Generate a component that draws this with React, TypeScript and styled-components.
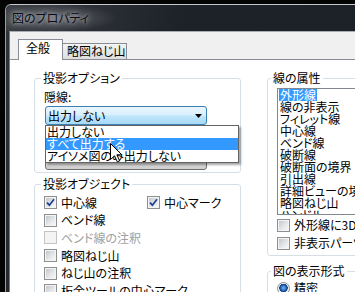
import React from "react";
import styled, {createGlobalStyle, css} from "styled-components";


const GlobalStyle = createGlobalStyle`
	html, body {
		margin: 0;
		padding: 0;
		background: #000;
	}
	body {
		font-family: "Noto Sans CJK JP", "Noto Sans", sans-serif;
		font-size: 12px;
		font-feature-settings: "palt";
		color: #000;
	}
`;

const Desktop = styled.div`
	position: relative;
	width: 355px;
	height: 292px;
	padding: 4px 0 0 5px;
	box-sizing: border-box;
	overflow: hidden;
	background: #040404;
`;

const Window = styled.div`
	display: flex;
	flex-direction: column;
	width: 420px;
	height: 320px;
	border-top: 1px solid #c6c9cc;
	border-left: 1px solid #9a9ea3;
	border-top-left-radius: 6px;
	background: linear-gradient(to bottom, #30353b, #23272c);
`;

const TitleBar = styled.div`
	display: flex;
	align-items: center;
	height: 26px;
	padding: 0 0 1px 6px;
	box-sizing: border-box;
	border-top-left-radius: 5px;
	background:
		radial-gradient(ellipse 64px 14px at 48px 13px, rgba(130, 134, 139, 0.6), transparent),
		linear-gradient(100deg, #3d4146 0%, #2b2f35 22%, #1d2128 42%, #1c2027 100%);
`;

const TitleText = styled.span`
	color: #0b0b16;
	line-height: 12px;
	text-shadow: 0 0 4px rgba(220, 222, 225, 0.9), 0 0 9px rgba(190, 193, 197, 0.6);
`;

const WindowBody = styled.div`
	display: flex;
	flex: 1;
	padding-left: 3px;
`;

const Client = styled.div`
	display: flex;
	flex-direction: column;
	flex: 1;
	background: #f0f0f0;
	border-top: 1px solid #a9adb2;
	border-left: 1px solid #767b80;
`;

const TabStrip = styled.div`
	display: flex;
	align-items: flex-end;
	height: 27px;
	padding-left: 8px;
`;

interface TabProps {
	$selected?: boolean
}

const Tab = styled.div<TabProps>`
	box-sizing: border-box;
	border: 1px solid #898c95;
	border-bottom: none;
	line-height: 12px;
	white-space: nowrap;
	${props => props.$selected ? css`
		position: relative;
		z-index: 2;
		width: 45px;
		height: 21px;
		margin-bottom: -1px;
		padding: 2px 0 0 7px;
		background: #fff;
	` : css`
		width: 65px;
		height: 16px;
		margin-left: -1px;
		padding: 1px 0 0 4px;
		background: linear-gradient(to bottom, #f4f4f4, #e8e8e8 50%, #dedede);
	`}
`;

const Panel = styled.div`
	display: grid;
	grid-template-columns: 207px 160px;
	column-gap: 26px;
	align-items: start;
	flex: 1;
	padding: 12px 0 0 24px;
	background: #fff;
	border-top: 1px solid #898c95;
`;

const Column = styled.div`
	display: flex;
	flex-direction: column;
`;

interface GroupProps {
	$gap?: number
}

const GroupBox = styled.fieldset<GroupProps>`
	margin: ${props => props.$gap || 0}px 0 0;
	padding: 0;
	min-width: 0;
	border: 1px solid #d5dfe5;
	border-radius: 3px;
`;

const Legend = styled.legend<{$indent: number}>`
	margin-left: ${props => props.$indent}px;
	padding: 0 2px;
	font-size: 12px;
	line-height: 12px;
`;

const GroupBody = styled.div<{$padding: string}>`
	display: flex;
	flex-direction: column;
	padding: ${props => props.$padding};
`;

const Label = styled.div`
	line-height: 12px;
`;

const ComboWrap = styled.div<{$top: number}>`
	position: relative;
	width: 162px;
	margin: ${props => props.$top}px 0 0 1px;
`;

const Combo = styled.div<{$hot?: boolean}>`
	display: flex;
	align-items: center;
	justify-content: space-between;
	height: 19px;
	padding: 0 4px 0 2px;
	box-sizing: border-box;
	border-radius: 3px;
	line-height: 12px;
	${props => props.$hot ? css`
		border: 1px solid #3c7fb1;
		background: linear-gradient(to bottom, #eaf6fd, #d9f0fc 45%, #bee6fd 55%, #a7d9f5);
	` : css`
		border: 1px solid #707070;
		background: linear-gradient(to bottom, #f2f2f2, #ebebeb 50%, #dddddd 50%, #cfcfcf);
	`}
`;

const DropList = styled.div`
	position: absolute;
	z-index: 3;
	left: 0;
	top: 100%;
	width: 192px;
	border: 1px solid #646464;
	background: #fff;
	box-shadow: 2px 2px 2px rgba(0, 0, 0, 0.35);
`;

const DropItem = styled.div<{$active?: boolean}>`
	height: 12px;
	padding-left: 1px;
	line-height: 12px;
	white-space: nowrap;
	${props => props.$active && css`
		background: #3399ff;
		color: #fff;
	`}
`;

const CheckRow = styled.div<{$height: number}>`
	display: flex;
	align-items: center;
	height: ${props => props.$height}px;
`;

const CheckItem = styled.div<{$width?: number, $disabled?: boolean}>`
	display: flex;
	align-items: center;
	gap: 4px;
	line-height: 12px;
	white-space: nowrap;
	${props => props.$width && css`width: ${props.$width}px;`}
	color: ${props => props.$disabled ? "#a0a0a0" : "#000"};
`;

const Box = styled.span<{$disabled?: boolean}>`
	display: inline-flex;
	align-items: center;
	justify-content: center;
	flex: none;
	width: 13px;
	height: 13px;
	box-sizing: border-box;
	padding: 1px;
	border: 1px solid ${props => props.$disabled ? "#c2c4c6" : "#8e8f8f"};
	background: ${props => props.$disabled
		? "#f4f4f4"
		: "linear-gradient(135deg, #c3c8ce, #e6e8ea 60%, #f6f6f6) content-box, #f4f4f4"};
`;

const Radio = styled(Box)`
	border-radius: 50%;
	background: radial-gradient(circle at 50% 45%, #7fb9f2 0, #2a6bc0 2.5px, #16418a 4px, transparent 4.5px), linear-gradient(135deg, #c3c8ce, #f6f6f6) content-box, #f4f4f4;
`;

const ListBox = styled.div`
	width: 200px;
	height: 127px;
	box-sizing: border-box;
	border: 1px solid #828790;
	overflow: hidden;
	background: #fff;
`;

const ListItem = styled.div`
	height: 12px;
	padding-left: 1px;
	line-height: 12px;
	white-space: nowrap;
`;

const ItemText = styled.span<{$selected?: boolean}>`
	display: inline-block;
	padding: 0 1px;
	${props => props.$selected && css`
		background: #3399ff;
		color: #fff;
	`}
`;

const Cursor = styled.svg`
	position: absolute;
	left: 110px;
	top: 143px;
	z-index: 5;
`;


function Check({
	checked,
	disabled}: {checked?: boolean, disabled?: boolean})
{
	return (
		<Box $disabled={disabled}>
			{checked &&
				<svg width="9" height="9" viewBox="0 0 9 9">
					<path d="M1 4.6 L3.4 7.2 L8 1.2" fill="none" stroke="#1d3f92" strokeWidth="1.7" />
				</svg>
			}
		</Box>
	);
}

const LineTypes = [
	"外形線", "線の非表示", "フィレット線", "中心線", "ベンド線", "破断線",
	"破断面の境界", "引出線", "詳細ビューの境界", "略図ねじ山", "ハンドル"
];

const HiddenOptions = ["出力しない", "すべて出力する", "アイソメ図のみ出力しない"];

const ShownObjects = [
	{label: "ベンド線"},
	{label: "ベンド線の注釈", disabled: true},
	{label: "略図ねじ山"},
	{label: "ねじ山の注釈"},
	{label: "板金ツールの中心マーク"}
];


export default function App()
{
	return (
		<>
			<GlobalStyle />
			<Desktop>
				<Window>
					<TitleBar>
						<TitleText>図のプロパティ</TitleText>
					</TitleBar>
					<WindowBody>
						<Client>
							<TabStrip>
								<Tab $selected>全般</Tab>
								<Tab>略図ねじ山</Tab>
							</TabStrip>
							<Panel>
								<Column>
									<GroupBox>
										<Legend $indent={6}>投影オプション</Legend>
										<GroupBody $padding="7px 0 2px 9px">
											<Label>隠線:</Label>
											<ComboWrap $top={3}>
												<Combo $hot>
													<span>出力しない</span>
													<svg width="7" height="4" viewBox="0 0 7 4">
														<path d="M0 0 H7 L3.5 4 Z" fill="#000" />
													</svg>
												</Combo>
												<DropList>
													{HiddenOptions.map((option, i) =>
														<DropItem key={option} $active={i === 1}>{option}</DropItem>
													)}
												</DropList>
											</ComboWrap>
											{/* second combo, almost entirely under the open list */}
											<ComboWrap $top={26}>
												<Combo />
											</ComboWrap>
										</GroupBody>
									</GroupBox>
									<GroupBox $gap={5}>
										<Legend $indent={6}>投影オブジェクト</Legend>
										<GroupBody $padding="4px 0 0 9px">
											<CheckRow $height={17.6}>
												<CheckItem $width={103}>
													<Check checked />中心線
												</CheckItem>
												<CheckItem>
													<Check checked />中心マーク
												</CheckItem>
											</CheckRow>
											{ShownObjects.map(({label, disabled}) =>
												<CheckRow key={label} $height={17.6}>
													<CheckItem $disabled={disabled}>
														<Check disabled={disabled} />{label}
													</CheckItem>
												</CheckRow>
											)}
										</GroupBody>
									</GroupBox>
								</Column>
								<Column>
									<GroupBox>
										<Legend $indent={3}>線の属性</Legend>
										<GroupBody $padding="4px 0 3px 9px">
											<ListBox>
												{LineTypes.map((type, i) =>
													<ListItem key={type}>
														<ItemText $selected={i === 0}>{type}</ItemText>
													</ListItem>
												)}
											</ListBox>
											<CheckRow $height={18} style={{marginTop: 1}}>
												<CheckItem><Check />外形線に3Dハイライトを表示</CheckItem>
											</CheckRow>
											<CheckRow $height={18}>
												<CheckItem><Check />非表示パーツの線を表示</CheckItem>
											</CheckRow>
										</GroupBody>
									</GroupBox>
									<GroupBox $gap={9}>
										<Legend $indent={3}>図の表示形式</Legend>
										<GroupBody $padding="2px 0 0 9px">
											<CheckRow $height={18}>
												<CheckItem><Radio />精密</CheckItem>
											</CheckRow>
										</GroupBody>
									</GroupBox>
								</Column>
							</Panel>
						</Client>
					</WindowBody>
				</Window>
				<Cursor width="13" height="20" viewBox="0 0 13 20">
					<path
						d="M0.5 0.5 L0.5 16.5 L4.5 12.8 L7.3 18.8 L9.6 17.8 L6.9 11.8 L11.8 11.8 Z"
						fill="#fff"
						stroke="#000"
						strokeWidth="1"
						strokeLinejoin="miter"
					/>
				</Cursor>
			</Desktop>
		</>
	);
}
